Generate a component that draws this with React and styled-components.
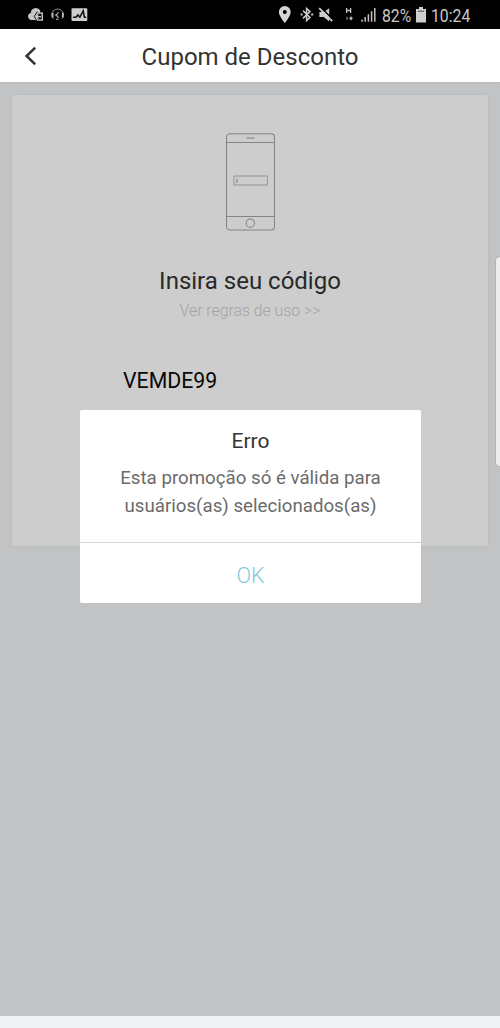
import React from "react";
import styled, { createGlobalStyle } from "styled-components";

const App = () => {
  return (
    <>
      <GlobalStyle />
      <Screen>
        <StatusBar>
          <Notifications />
          <SystemStatus />
        </StatusBar>
        <Header>
          <BackButton aria-label="Voltar">
            <svg width="14" height="20" viewBox="0 0 14 20" fill="none">
              <path d="M11.2 1.6 2.6 10l8.6 8.4" stroke="#333" strokeWidth="2.5" />
            </svg>
          </BackButton>
          <Title>Cupom de Desconto</Title>
        </Header>
        <Content>
          <Card>
            <PhoneIcon />
            <CardTitle>Insira seu código</CardTitle>
            <Rules>Ver regras de uso &gt;&gt;</Rules>
            <Code>VEMDE99</Code>
          </Card>
        </Content>
        <BottomBar />
        <EdgeHandle />
        <Dialog role="alertdialog">
          <DialogBody>
            <DialogTitle>Erro</DialogTitle>
            <Message>
              Esta promoção só é válida para
              <br />
              usuários(as) selecionados(as)
            </Message>
          </DialogBody>
          <OkButton>OK</OkButton>
        </Dialog>
      </Screen>
    </>
  );
};

export default App;

const Notifications = () => (
  <svg width="62" height="16" viewBox="27 7 62 16" fill="none">
    <path
      d="M31.4 20a3.5 3.5 0 0 1-.6-6.9 5 5 0 0 1 9.4-2.5v9.4z"
      fill="#c6c6c6"
    />
    <rect x="36.8" y="12.4" width="6.2" height="8.4" fill="#c6c6c6" />
    <path d="M37.6 13.7h4v5.8h-4z" fill="#111" />
    <path
      d="M41 16.6h-4.4M38.4 14.4l-2.3 2.2 2.3 2.2"
      stroke="#c6c6c6"
      strokeWidth="1.3"
    />
    <path
      d="M37.4 11.6 34.2 16.6l2.2 3"
      stroke="#111"
      strokeWidth="1"
    />
    <path
      d="M53.4 18.8a5.8 5.8 0 1 1 8.4 0"
      stroke="#999"
      strokeWidth="1"
    />
    <path d="M52.6 12.8v4.8M62.8 12.8v4.8" stroke="#bbb" strokeWidth="1.7" />
    <path
      d="M58.6 12.4l-2.6 2.6 2.6 2.8M54.8 15h2.6M56.2 19.4h2.2"
      stroke="#aaa"
      strokeWidth="1.2"
    />
    <rect x="71.5" y="8.3" width="15.8" height="12.8" rx="1" fill="#cecece" />
    <path
      d="M73 17.2h3l1.9-2.2 2 2.2 3.3-6.4 1.2 6.4h1.8"
      stroke="#111"
      strokeWidth="1.5"
    />
  </svg>
);

const SystemStatus = () => (
  <StatusGroup>
    <svg width="99" height="20" viewBox="278 5 99 20" fill="none">
      <path
        d="M284.8 6a5.9 5.9 0 0 0-5.9 5.9c0 4.2 5.9 11 5.9 11s5.9-6.8 5.9-11a5.9 5.9 0 0 0-5.9-5.9zm0 3.9a2 2 0 1 1 0 4 2 2 0 0 1 0-4z"
        fill="#d6d6d6"
        fillRule="evenodd"
      />
      <path
        d="m303 10.6 7 6.8-3.4 3.2V8.4l3.4 3.2-7 6.8"
        stroke="#ccc"
        strokeWidth="1.5"
      />
      <path
        d="M300.6 14.5h2M311.2 14.5h2"
        stroke="#ccc"
        strokeWidth="1.9"
      />
      <path
        d="M319.4 12h4.4l5.4-3.8v13.2l-5.4-4.4h-4.4z"
        fill="#ccc"
      />
      <path d="m320.2 6.8 13 13" stroke="#000" strokeWidth="1.6" />
      <path d="m319.2 8.2 13 13" stroke="#ccc" strokeWidth="1.8" />
      <path
        d="M346.6 8v5M350.6 8v5M346.6 10.5h4"
        stroke="#c4c4c4"
        strokeWidth="1.3"
      />
      <path d="M347 16.8v3" stroke="#888" strokeWidth="1.3" />
      <path d="M351 16.4v2" stroke="#c4c4c4" strokeWidth="1.4" />
      <path d="M348.8 17.8h4.4l-2.2 2.8z" fill="#c4c4c4" />
      <path
        d="M362 19.6v2.2M365.2 17v4.8M368.4 14.2v7.6M371.6 11.2v10.6M374.8 8v13.8"
        stroke="#c0c0c0"
        strokeWidth="1.5"
      />
    </svg>
    <StatusText $width={29}>82%</StatusText>
    <svg width="10" height="16" viewBox="0 0 10 16">
      <path d="M3 0h4v2h3v13.6H0V2h3z" fill="#cecece" />
      <path d="M1.8 4.2h6.4" stroke="#444" strokeWidth="1" />
    </svg>
    <StatusText $width={40}>10:24</StatusText>
  </StatusGroup>
);

const PhoneIcon = () => (
  <svg width="50" height="98" viewBox="0 0 50 98" fill="none" stroke="#858585">
    <rect x="1.5" y="0.8" width="48" height="96.2" rx="3.5" strokeWidth="1.1" />
    <path d="M1.5 9.5h48M1.5 83.5h48" strokeWidth="1" />
    <path d="M21.5 5h8" strokeWidth="1.1" />
    <rect x="9" y="43" width="33.4" height="9" stroke="#959595" strokeWidth="1" />
    <path d="M12 45.8v4" strokeWidth="1.2" />
    <circle cx="25.3" cy="90.2" r="4.2" strokeWidth="1.1" />
  </svg>
);

const GlobalStyle = createGlobalStyle`
  * {
    box-sizing: border-box;
  }
  body {
    margin: 0;
    font-family: Roboto, "Liberation Sans", sans-serif;
  }
  button {
    border: none;
    background: none;
    padding: 0;
    font-family: inherit;
  }
`;

const Screen = styled.div`
  position: relative;
  display: flex;
  flex-direction: column;
  width: 500px;
  height: 1028px;
  overflow: hidden;
  background-color: #c2c3c5;
`;

const StatusBar = styled.div`
  display: flex;
  align-items: center;
  justify-content: space-between;
  height: 29px;
  padding: 0 29px 0 27px;
  background-color: #000;
`;

const StatusGroup = styled.div`
  display: flex;
  align-items: center;
  gap: 5px;
`;

const StatusText = styled.span`
  width: ${({ $width }) => $width}px;
  padding-top: 2px;
  color: #c9c9c9;
  font-size: 19px;
  line-height: 29px;
  white-space: nowrap;
  transform: scaleX(0.83);
  transform-origin: left;
`;

const Header = styled.header`
  display: grid;
  grid-template-columns: 62px 1fr 62px;
  align-items: center;
  height: 53px;
  background-color: #fff;
`;

const BackButton = styled.button`
  display: flex;
  justify-content: center;
`;

const Title = styled.h1`
  margin: 0;
  padding-top: 2px;
  color: #333;
  font-size: 24px;
  font-weight: 400;
  line-height: 32px;
  text-align: center;
`;

const Content = styled.main`
  flex: 1;
  padding: 13px 12px 0;
  box-shadow: inset 0 2px 2px -1px #b9bbbc;
`;

const Card = styled.section`
  display: flex;
  flex-direction: column;
  align-items: center;
  height: 451px;
  padding-top: 38px;
  border-radius: 3px;
  background-color: #cdcdcd;
  box-shadow: 0 0 3px 1px #b9bdbf;
`;

const CardTitle = styled.h2`
  margin: 34px 0 0;
  color: #292929;
  font-size: 24px;
  font-weight: 400;
  line-height: 32px;
`;

const Rules = styled.a`
  margin-top: 3px;
  color: #a3a3a3;
  font-size: 15.8px;
  font-weight: 300;
  line-height: 22px;
`;

const Code = styled.div`
  align-self: flex-start;
  margin: 44px 0 0 111px;
  color: #080808;
  font-size: 21.3px;
  line-height: 30px;
`;

const BottomBar = styled.div`
  height: 12px;
  background-color: #f1f2f4;
`;

const EdgeHandle = styled.div`
  position: absolute;
  top: 257px;
  right: -6px;
  width: 10px;
  height: 209px;
  border-radius: 4px;
  background-color: #ededed;
  box-shadow: 0 0 1px 1px #b0b2b3;
`;

const Dialog = styled.div`
  position: absolute;
  top: 410px;
  left: 80px;
  display: flex;
  flex-direction: column;
  width: 341px;
  height: 193px;
  border-radius: 2px;
  background-color: #fff;
`;

const DialogBody = styled.div`
  height: 133px;
  padding-top: 17px;
  border-bottom: 1px solid #d5d5d5;
  text-align: center;
`;

const DialogTitle = styled.h3`
  margin: 0;
  color: #333;
  font-size: 21px;
  font-weight: 400;
  line-height: 28px;
`;

const Message = styled.p`
  margin: 9px 0 0;
  color: #6b6b6b;
  font-size: 18.7px;
  line-height: 28px;
`;

const OkButton = styled.button`
  flex: 1;
  padding-top: 4px;
  color: #7fc8dc;
  font-size: 21.5px;
  font-weight: 300;
`;
